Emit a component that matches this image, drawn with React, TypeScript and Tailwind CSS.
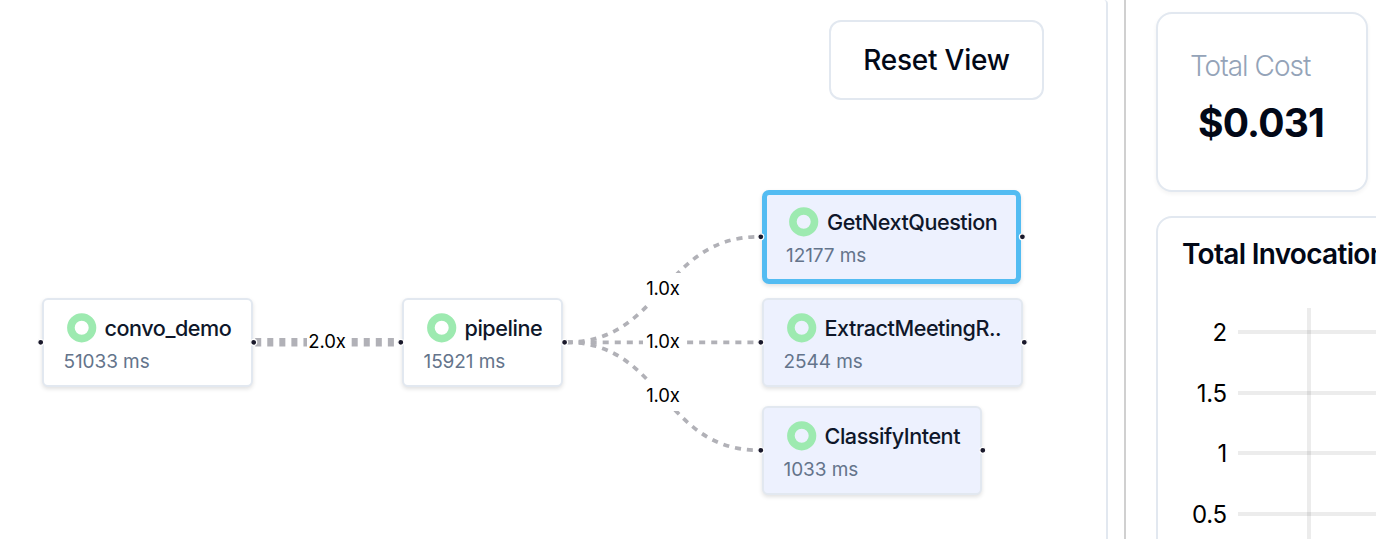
import React from "react";

type FlowNode = {
  name: string;
  time: string;
  box: string;
  selected?: boolean;
  tinted?: boolean;
};

const nodes: FlowNode[] = [
  { name: "convo_demo", time: "51033 ms", box: "left-[42px] top-[298px] w-[210.5px]" },
  { name: "pipeline", time: "15921 ms", box: "left-[402px] top-[298px] w-[161px]" },
  { name: "GetNextQuestion", time: "12177 ms", box: "left-[762px] top-[190px] w-[259px]", selected: true, tinted: true },
  { name: "ExtractMeetingR..", time: "2544 ms", box: "left-[762px] top-[298px] w-[261px]", tinted: true },
  { name: "ClassifyIntent", time: "1033 ms", box: "left-[762px] top-[406px] w-[219.5px]", tinted: true },
];

const edges = [
  { d: "M255.2 342.3H399.5", width: 8.4 },
  { d: "M566.5 342.3C662.5 342.3 662.5 236.8 759 236.8", width: 3.7 },
  { d: "M566.5 342.3H759", width: 3.7 },
  { d: "M566.5 342.3C662.5 342.3 662.5 450.3 759 450.3", width: 3.7 },
];

const edgeLabels = [
  { text: "2.0x", box: "left-[307px] top-[326px]" },
  { text: "1.0x", box: "left-[643px] top-[273px]" },
  { text: "1.0x", box: "left-[643px] top-[326px]" },
  { text: "1.0x", box: "left-[643px] top-[380px]" },
];

const handles = [
  [40.7, 342.3],
  [253.7, 342.3],
  [400.8, 342.3],
  [564.6, 342.3],
  [760.8, 236.8],
  [1022.4, 236.8],
  [760.8, 342.3],
  [1024.3, 342.3],
  [760.8, 450.3],
  [982.8, 450.3],
];

function NodeCard({ node }: { node: FlowNode }) {
  const frame = node.selected
    ? "h-[93.5px] border-[5px] border-[#53bcf2] rounded-[7px] pl-[19px] pt-[11.7px]"
    : "h-[89px] border-2 border-[#e2e8f0] rounded-[6px] pl-[19.5px] pt-[13px]";
  return (
    <div
      className={`absolute ${node.box} ${frame} ${node.tinted ? "bg-[#edf1fe]" : "bg-white"} shadow-[0_2px_4px_rgba(0,0,0,0.12)]`}
    >
      <div className="flex items-center whitespace-nowrap pl-[3px]">
        <svg className="size-[30px] shrink-0" viewBox="0 0 30 30">
          <circle cx="14.7" cy="14.8" r="10.8" fill="none" stroke="#9deab0" strokeWidth="7.6" />
        </svg>
        <span className="ml-2 text-[21.6px] leading-[30px] font-medium tracking-[-0.46px] text-[#0f172a]">
          {node.name}
        </span>
      </div>
      <div className="mt-[5px] text-[19px] leading-[28px] tracking-[-0.08px] text-[#64748b]">{node.time}</div>
    </div>
  );
}

function FlowCanvas() {
  return (
    <div className="relative h-full w-[1108px] shrink-0 overflow-hidden rounded-tr-[4px] border-r-2 border-[#e2e8f0]">
      <svg className="absolute left-0 top-0" width="1106" height="539">
        {edges.map((e) => (
          <path key={e.d} d={e.d} fill="none" stroke="#b1b1b7" strokeWidth={e.width} strokeDasharray="6.03 6.03" />
        ))}
      </svg>
      {edgeLabels.map((l) => (
        <div
          key={l.box}
          className={`absolute ${l.box} flex h-[31px] w-[40px] items-center justify-center bg-white text-[18.5px] tracking-[-0.15px] text-black`}
        >
          {l.text}
        </div>
      ))}
      {nodes.map((n) => (
        <NodeCard key={n.name} node={n} />
      ))}
      <svg className="absolute left-0 top-0" width="1106" height="539">
        {handles.map(([x, y]) => (
          <circle key={`${x}-${y}`} cx={x} cy={y} r="3" fill="#1a192b" stroke="#fff" strokeWidth="1.2" />
        ))}
      </svg>
      <button className="absolute left-[829px] top-5 h-20 w-[215px] rounded-[12px] border-2 border-[#e2e8f0] bg-white text-[28px] font-medium tracking-[-0.22px] text-[#020817]">
        Reset View
      </button>
    </div>
  );
}

const ticks = [
  { label: "2", y: 116 },
  { label: "1.5", y: 177 },
  { label: "1", y: 237 },
  { label: "0.5", y: 298 },
];

function Metrics() {
  return (
    <div className="flex w-[250px] shrink-0 flex-col gap-6 pl-[30px] pt-3">
      <div className="h-[180px] w-[212px] shrink-0 rounded-[16px] border-2 border-[#e2e8f0] bg-white pl-8 pt-8 shadow-[0_2px_4px_rgba(0,0,0,0.05)]">
        <div className="text-[28px] leading-[40px] font-light tracking-[-1px] text-[#94a3b8]">Total Cost</div>
        <div className="pl-2 pt-[17px] text-[39px] leading-[40px] font-bold tracking-[-0.8px] text-[#020817]">
          $0.031
        </div>
      </div>
      <div className="h-[500px] w-[600px] shrink-0 rounded-[16px] border-2 border-[#e2e8f0] bg-white">
        <div className="pl-6 pt-4 text-[28px] leading-[40px] font-semibold tracking-[-0.7px] text-[#020817]">
          Total Invocations
        </div>
        <svg className="-mt-[56px]" width="596" height="490">
          {ticks.map((t) => (
            <g key={t.label}>
              <text x="69" y={t.y + 6.5} textAnchor="end" fontSize="24" letterSpacing="-0.2" fill="#000">
                {t.label}
              </text>
              <path d={`M80 ${t.y - 2}H590`} stroke="#000" strokeOpacity="0.075" strokeWidth="4" />
            </g>
          ))}
          <path d="M151 90V480" stroke="#000" strokeOpacity="0.075" strokeWidth="4" />
        </svg>
      </div>
    </div>
  );
}

export default function App() {
  return (
    <div className="flex h-[539px] w-[1376px] overflow-hidden bg-white font-['Inter',sans-serif]">
      <FlowCanvas />
      <div className="ml-4 h-full w-[2px] shrink-0 bg-[#d0d0d0]" />
      <Metrics />
    </div>
  );
}
